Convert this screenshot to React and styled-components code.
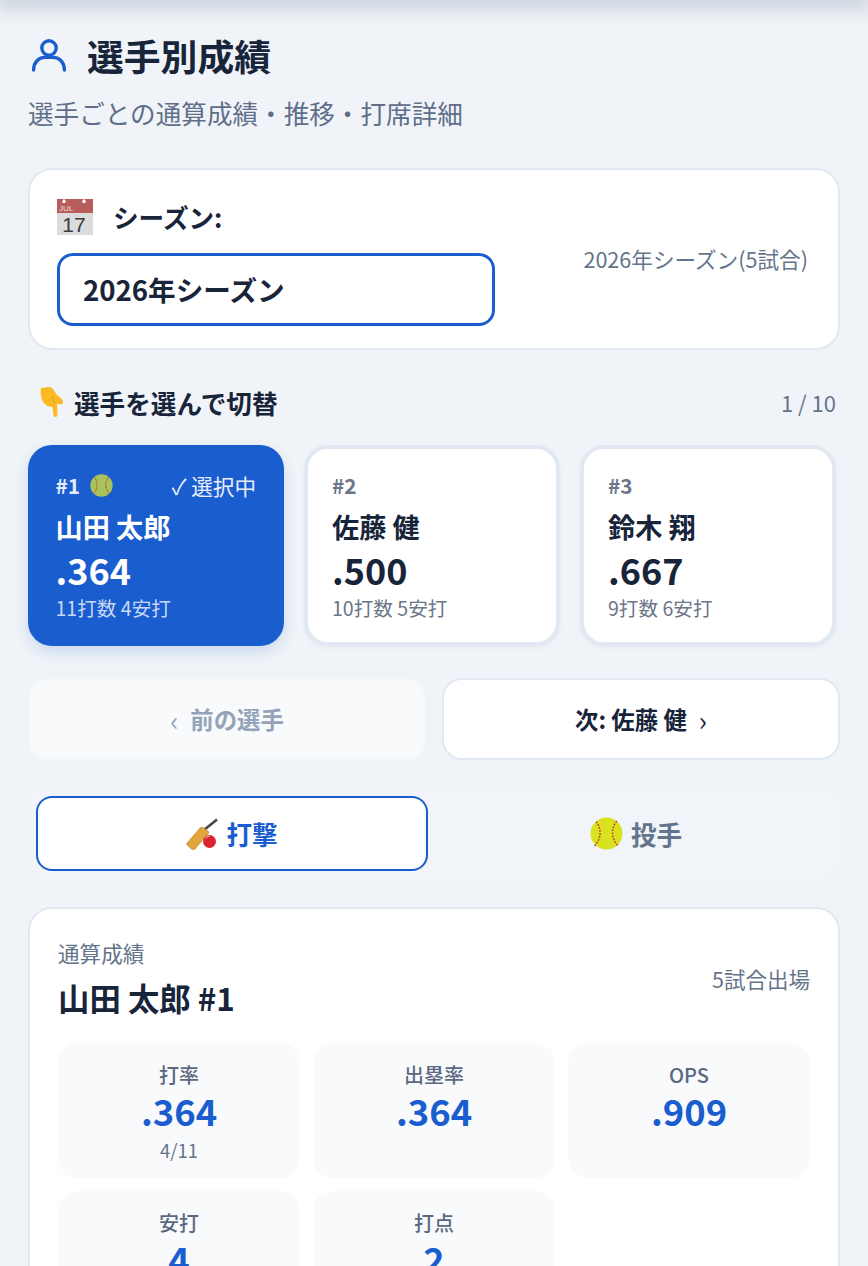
import React from "react";
import styled, { createGlobalStyle } from "styled-components";

const players = [
  { no: "#1", name: "山田 太郎", avg: ".364", sub: "11打数 4安打", active: true },
  { no: "#2", name: "佐藤 健", avg: ".500", sub: "10打数 5安打" },
  { no: "#3", name: "鈴木 翔", avg: ".667", sub: "9打数 6安打" },
];

const stats = [
  { label: "打率", value: ".364", sub: "4/11" },
  { label: "出塁率", value: ".364" },
  { label: "OPS", value: ".909" },
  { label: "安打", value: "4" },
  { label: "打点", value: "2" },
];

function UserIcon() {
  return (
    <svg width="36" height="36" viewBox="0 0 36 36" fill="none" stroke="#1a5dcf" strokeWidth="3.4" strokeLinecap="round">
      <circle cx="18" cy="11" r="7.2" />
      <path d="M2.6 33c0-7.600 5-12.600 11-12.600h8.800c6 0 11 5 11 12.600" />
    </svg>
  );
}

function CalendarIcon() {
  return (
    <svg width="36" height="36" viewBox="0 0 36 36">
      <rect width="36" height="36" fill="#dcdcdc" />
      <rect width="36" height="14" fill="#b85c5c" />
      <path d="M7 0v2M27 0v2" stroke="#fff" strokeWidth="1" />
      <circle cx="7" cy="2.500" r="1.700" fill="#fff" />
      <circle cx="27" cy="2.500" r="1.700" fill="#fff" />
      <text x="2" y="12" fontSize="8" fontWeight="400" fill="#f1dede" fontFamily="Liberation Sans, sans-serif">JUL</text>
      <text x="17" y="32.500" fontSize="21" fontWeight="400" textAnchor="middle" fill="#3a3a3a" fontFamily="Liberation Sans, sans-serif">17</text>
    </svg>
  );
}

function PointDownIcon() {
  return (
    <svg width="23" height="31" viewBox="0 0 23 31">
      <path
        d="M1 1 9 0c2 0 3 1 4 2l4 6c3 2 6 5 6 7 0 2-2 3-5 2h-1l.5 11c0 2.500-4 2.500-4 0l-1-8c-4.500 0-8.500-3-10-6C1 10 0 5 1 1z"
        fill="#fbb924"
      />
      <path d="M13 9c-.5 2.500 0 5 2 7" stroke="#e08a00" strokeWidth=".8" fill="none" />
    </svg>
  );
}

function BallIcon({ size, fill, seam }) {
  return (
    <svg width={size} height={size} viewBox="0 0 32 32">
      <circle cx="16" cy="16" r="15.500" fill={fill} />
      <path d="M6 4.500c5 6 5.500 16-1.500 23.500M26 4c-5.500 6-6 17 1.500 24" fill="none" stroke={seam} strokeWidth="1.500" strokeDasharray="1.600 1.400" />
    </svg>
  );
}

function BatIcon() {
  return (
    <svg width="32" height="32" viewBox="0 0 32 32">
      <path d="M18 12 31 1.500" stroke="#444" strokeWidth="2.500" />
      <path
        d="M1 25 14 10c1-1 2-1 3-.5l5 3.500c1 1 1 2 0 3L9 31c-1 1-2 1-3 .5l-4.500-4c-1-1-1-1.500-.5-2.500z"
        fill="#e0a63c"
        stroke="#b9832a"
        strokeWidth=".6"
      />
      <circle cx="23.500" cy="23.500" r="6.500" fill="#d9252f" />
      <path d="M19.500 20.500a5.500 5.500 0 0 1 4.500-2.500" stroke="#f58a8f" strokeWidth="1.300" fill="none" />
    </svg>
  );
}

function App() {
  return (
    <Page>
      <GlobalStyle />
      <TopShadow />
      <Content>
        <TitleRow>
          <UserIcon />
          <Title>選手別成績</Title>
        </TitleRow>
        <Subtitle>選手ごとの通算成績・推移・打席詳細</Subtitle>

        <SeasonCard>
          <SeasonLeft>
            <SeasonLabel>
              <CalendarIcon />
              <span>シーズン:</span>
            </SeasonLabel>
            <SeasonSelect>2026年シーズン</SeasonSelect>
          </SeasonLeft>
          <SeasonNote>2026年シーズン(5試合)</SeasonNote>
        </SeasonCard>

        <PickHead>
          <PickTitle>
            <PointDownIcon />
            <span>選手を選んで切替</span>
          </PickTitle>
          <PickCount>1 / 10</PickCount>
        </PickHead>

        <PlayerRow>
          {players.map((p) => (
            <PlayerCard key={p.no} $active={p.active}>
              <PlayerTop>
                <PlayerNo $active={p.active}>
                  {p.no}
                  {p.active && <BallIcon size={23} fill="#a9c25a" seam="#a5483a" />}
                </PlayerNo>
                {p.active && <Selected>✓ 選択中</Selected>}
              </PlayerTop>
              <PlayerName>{p.name}</PlayerName>
              <PlayerAvg>{p.avg}</PlayerAvg>
              <PlayerSub $active={p.active}>{p.sub}</PlayerSub>
            </PlayerCard>
          ))}
        </PlayerRow>

        <NavRow>
          <NavButton disabled>
            <Chevron>‹</Chevron>
            前の選手
          </NavButton>
          <NavButton>
            次: 佐藤 健
            <Chevron>›</Chevron>
          </NavButton>
        </NavRow>

        <Tabs>
          <Tab $active>
            <BatIcon />
            打撃
          </Tab>
          <Tab>
            <BallIcon size={33} fill="#d8e21e" seam="#c9352b" />
            投手
          </Tab>
        </Tabs>

        <StatsCard>
          <StatsHead>
            <div>
              <StatsLabel>通算成績</StatsLabel>
              <StatsName>山田 太郎 #1</StatsName>
            </div>
            <StatsGames>5試合出場</StatsGames>
          </StatsHead>
          <StatsGrid>
            {stats.map((s) => (
              <StatTile key={s.label}>
                <StatLabel>{s.label}</StatLabel>
                <StatValue>{s.value}</StatValue>
                {s.sub && <StatSub>{s.sub}</StatSub>}
              </StatTile>
            ))}
          </StatsGrid>
        </StatsCard>
      </Content>
    </Page>
  );
}

const GlobalStyle = createGlobalStyle`
  html, body {
    margin: 0;
    height: 100%;
    overflow: hidden;
    background: #f0f4f8;
  }
  body {
    font-family: "Noto Sans CJK JP", "Noto Sans", sans-serif;
    color: #18243a;
  }
`;

const Page = styled.div`
  height: 1266px;
  overflow: hidden;
`;

const TopShadow = styled.div`
  height: 0;
  box-shadow: 0 0 20px 5px rgba(90, 105, 135, 0.48);
`;

const Content = styled.main`
  padding: 0 28px;
`;

const TitleRow = styled.div`
  display: flex;
  align-items: center;
  gap: 20px;
  padding: 28px 0 0 3px;
  height: 54px;
`;

const Title = styled.h1`
  margin: 0;
  font-size: 36.800px;
  line-height: 54px;
  font-weight: 700;
`;

const Subtitle = styled.p`
  margin: 9px 0 0;
  font-size: 25.600px;
  line-height: 44px;
  color: #5f6f8a;
`;

const SeasonCard = styled.section`
  box-sizing: border-box;
  display: flex;
  justify-content: space-between;
  align-items: center;
  height: 182px;
  margin-top: 33px;
  padding: 6px 30px 0 27px;
  background: #fff;
  border: 2px solid #e2e8f2;
  border-radius: 24px;
`;

const SeasonLeft = styled.div`
  display: flex;
  flex-direction: column;
  gap: 18px;
`;

const SeasonLabel = styled.div`
  display: flex;
  align-items: center;
  gap: 20px;
  font-size: 25.600px;
  line-height: 36px;
  font-weight: 700;
`;

const SeasonSelect = styled.div`
  box-sizing: border-box;
  width: 438px;
  height: 73px;
  padding-left: 23px;
  display: flex;
  align-items: center;
  font-size: 27.600px;
  font-weight: 700;
  border: 3px solid #1a5dcf;
  border-radius: 16px;
`;

const SeasonNote = styled.div`
  font-size: 21.600px;
  color: #64748b;
  margin-bottom: 8px;
`;

const PickHead = styled.div`
  display: flex;
  justify-content: space-between;
  align-items: center;
  margin-top: 36px;
  padding: 0 4px 0 12px;
  height: 32px;
`;

const PickTitle = styled.div`
  display: flex;
  align-items: center;
  gap: 11px;
  font-size: 25.600px;
  font-weight: 700;
`;

const PickCount = styled.div`
  font-size: 22px;
  color: #64748b;
`;

const PlayerRow = styled.div`
  display: grid;
  grid-template-columns: repeat(3, 256px);
  gap: 20px;
  margin-top: 27px;
`;

const PlayerCard = styled.div`
  box-sizing: border-box;
  height: 201px;
  padding: ${(p) => (p.$active ? "25px 28px 0 27.500px" : "21px 24px 0")};
  border-radius: 24px;
  background: ${(p) => (p.$active ? "#1a5dcf" : "#fff")};
  color: ${(p) => (p.$active ? "#fff" : "#18243a")};
  border: ${(p) => (p.$active ? "none" : "4px solid #e2e8f2")};
  box-shadow: ${(p) => (p.$active ? "0 6px 14px rgba(26, 93, 207, 0.18)" : "0 2px 4px rgba(60, 80, 120, 0.06)")};
`;

const PlayerTop = styled.div`
  display: flex;
  justify-content: space-between;
  align-items: center;
  height: 30px;
`;

const PlayerNo = styled.div`
  display: flex;
  align-items: center;
  gap: 10px;
  font-size: 20.800px;
  font-weight: 700;
  color: ${(p) => (p.$active ? "#e4ecfa" : "#6b7688")};
`;

const Selected = styled.span`
  font-size: 21.600px;
  color: #e8effb;
  white-space: nowrap;
`;

const PlayerName = styled.div`
  margin-top: 6px;
  font-size: 27.200px;
  line-height: 40px;
  font-weight: 700;
`;

const PlayerAvg = styled.div`
  font-size: 36px;
  line-height: 46px;
  font-weight: 700;
`;

const PlayerSub = styled.div`
  margin-top: 2px;
  font-size: 19.600px;
  line-height: 28px;
  color: ${(p) => (p.$active ? "#c7d8f5" : "#6b7688")};
`;

const NavRow = styled.div`
  display: grid;
  grid-template-columns: 1fr 1fr;
  gap: 16px;
  margin-top: 32px;
`;

const NavButton = styled.button`
  height: 82px;
  display: flex;
  align-items: center;
  justify-content: center;
  gap: 12px;
  font-family: inherit;
  font-size: 23.400px;
  font-weight: 700;
  border-radius: 20px;
  background: ${(p) => (p.disabled ? "#f8fafc" : "#fff")};
  color: ${(p) => (p.disabled ? "#94a3b8" : "#18243a")};
  border: 2px solid ${(p) => (p.disabled ? "#f4f7fa" : "#e2e8f2")};
`;

const Chevron = styled.span`
  font-size: 27px;
  line-height: 1;
  font-weight: 400;
`;

const Tabs = styled.div`
  display: grid;
  grid-template-columns: 1fr 1fr;
  gap: 12px;
  margin-top: 28px;
  padding: 8px;
  border-radius: 20px;
  background: #f1f5f9;
`;

const Tab = styled.div`
  box-sizing: border-box;
  height: 75px;
  display: flex;
  align-items: center;
  justify-content: center;
  gap: 8px;
  font-size: 25.600px;
  font-weight: 700;
  border-radius: 16px;
  color: ${(p) => (p.$active ? "#1a5dcf" : "#64748b")};
  background: ${(p) => (p.$active ? "#fff" : "transparent")};
  border: ${(p) => (p.$active ? "2.500px solid #1a5dcf" : "none")};
`;

const StatsCard = styled.section`
  margin-top: 28px;
  padding: 27px 28px 28px;
  background: #fff;
  border: 2px solid #e2e8f2;
  border-radius: 24px;
`;

const StatsHead = styled.div`
  display: flex;
  justify-content: space-between;
  align-items: center;
`;

const StatsLabel = styled.div`
  font-size: 21.600px;
  line-height: 34px;
  color: #64748b;
`;

const StatsName = styled.div`
  margin-top: 5px;
  font-size: 31.400px;
  line-height: 46px;
  font-weight: 700;
`;

const StatsGames = styled.div`
  font-size: 21.500px;
  color: #64748b;
`;

const StatsGrid = styled.div`
  display: grid;
  grid-template-columns: repeat(3, 1fr);
  gap: 13px;
  margin-top: 22px;
`;

const StatTile = styled.div`
  box-sizing: border-box;
  min-height: 135px;
  padding: 17px 12px 14px;
  text-align: center;
  background: #f8fafc;
  border-radius: 20px;
`;

const StatLabel = styled.div`
  font-size: 20px;
  line-height: 30px;
  font-weight: 500;
  color: #5b6880;
`;

const StatValue = styled.div`
  font-size: 36.400px;
  line-height: 40px;
  font-weight: 700;
  color: #1a5dcf;
`;

const StatSub = styled.div`
  margin-top: 6px;
  font-size: 18.500px;
  line-height: 28px;
  color: #64748b;
`;

export default App;
